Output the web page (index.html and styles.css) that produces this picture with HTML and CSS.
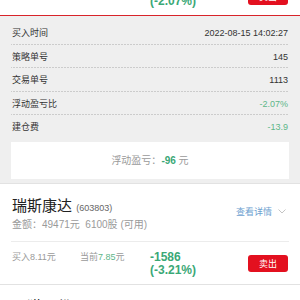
FILE: index.html
```html
<!DOCTYPE html>
<html lang="zh-CN">

<head>
    <meta charset="UTF-8">
    <meta name="viewport" content="width=device-width, initial-scale=1.0">
    <title>持仓</title>
    <link rel="stylesheet" href="styles.css">
</head>

<body>
    <div class="list">
        <div class="card card-prev">
            <div class="trade">
                <span class="buy"></span>
                <span class="now"></span>
                <div class="pl"><b>-96</b><b>(-2.07%)</b></div>
                <button class="sell">卖出</button>
            </div>
        </div>

        <div class="detail">
            <div class="row"><span>买入时间</span><span>2022-08-15 14:02:27</span></div>
            <div class="row"><span>策略单号</span><span>145</span></div>
            <div class="row"><span>交易单号</span><span>1113</span></div>
            <div class="row"><span>浮动盈亏比</span><span class="down">-2.07%</span></div>
            <div class="row last"><span>建仓费</span><span class="down">-13.9</span></div>
            <div class="sum">浮动盈亏：<b>-96</b> 元</div>
        </div>

        <div class="card">
            <div class="head">
                <div class="info">
                    <div class="name">瑞斯康达 <span class="code">(603803)</span></div>
                    <div class="amount">金额：49471元&nbsp; 6100股 (可用)</div>
                </div>
                <a class="more">查看详情
                    <svg width="8" height="5" viewBox="0 0 8 5"><path d="M0.5 0.5 L4 4 L7.5 0.5" fill="none" stroke="#c4c4c4" stroke-width="1"/></svg>
                </a>
            </div>
            <div class="trade">
                <span class="buy">买入8.11元</span>
                <span class="now">当前<em>7.85</em>元</span>
                <div class="pl"><b>-1586</b><b>(-3.21%)</b></div>
                <button class="sell">卖出</button>
            </div>
        </div>

        <div class="card">
            <div class="head">
                <div class="info">
                    <div class="name">国猫股份 <span class="code">(603477)</span></div>
                    <div class="amount">金额：30120元&nbsp; 4000股 (可用)</div>
                </div>
            </div>
        </div>
    </div>
</body>

</html>
```

FILE: styles.css
```css
* {
    margin: 0;
    padding: 0;
    box-sizing: border-box;
    font-family: "Liberation Sans", "Noto Sans CJK SC", sans-serif;
}

body {
    width: 300px;
    background: white;
    overflow: hidden;
}

.card {
    background: white;
    border-bottom: 1px solid #e2e2e2;
}

.card-prev {
    margin-top: -27px;
    border-bottom: 1px solid #d8232a;
}

.card-prev .sell {
    margin-top: 2px;
}

.head {
    display: flex;
    align-items: center;
    justify-content: space-between;
    padding: 13px 1px 8px;
    margin: 0 11px;
    border-bottom: 1px solid #ececec;
}

.head .info {
    display: flex;
    flex-direction: column;
}

.name {
    font-size: 15px;
    line-height: 18px;
    color: #222;
}

.code {
    font-size: 9px;
    color: #666;
}

.amount {
    font-size: 10px;
    line-height: 16px;
    color: #9a9a9a;
}

.more {
    display: flex;
    align-items: center;
    gap: 6px;
    font-size: 9px;
    color: #6d9fd0;
    margin-top: -6px;
    margin-right: 2px;
}

.trade {
    display: flex;
    align-items: flex-start;
    padding: 9px 12px 7px;
}

.buy,
.now {
    font-size: 9px;
    line-height: 13px;
    color: #9a9a9a;
}

.buy {
    width: 68px;
}

.now {
    width: 70px;
}

.now em {
    font-style: normal;
    color: #5db689;
}

.pl {
    flex: 1;
    display: flex;
    flex-direction: column;
}

.pl b {
    font-size: 12px;
    line-height: 13px;
    color: #3aa876;
}

.sell {
    align-self: center;
    width: 40px;
    height: 17px;
    border: none;
    border-radius: 3px;
    background: #e3101f;
    color: white;
    font-size: 9px;
}

.detail {
    background: #efefef;
    padding: 6px 11px 4px;
    border-bottom: 1px solid #e2e2e2;
}

.row {
    display: flex;
    justify-content: space-between;
    padding: 0 1px;
    font-size: 9px;
    line-height: 22.5px;
    color: #333;
    border-bottom: 1px solid transparent;
    background: linear-gradient(to right, #a8a8a8 50%, transparent 0) bottom / 3px 1px repeat-x;
}

.row.last {
    background: none;
}

.down {
    color: #5db689;
}

.sum {
    margin-top: 2px;
    height: 37px;
    line-height: 37px;
    background: white;
    text-align: center;
    font-size: 10px;
    color: #9a9a9a;
}

.sum b {
    color: #3aa876;
}
```
